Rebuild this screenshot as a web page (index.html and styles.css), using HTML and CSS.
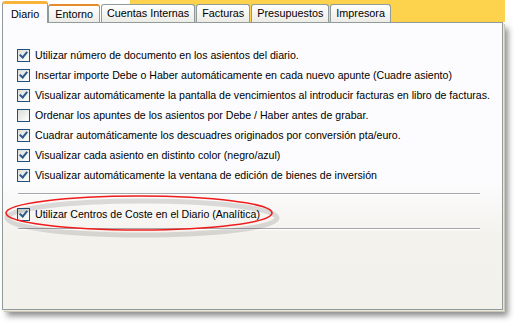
FILE: index.html
```html
<!DOCTYPE html>
<html lang="es">
<head>
    <meta charset="UTF-8">
    <title>Opciones - Diario</title>
    <link rel="stylesheet" href="styles.css">
</head>
<body>
<div class="window">
    <div class="tabstrip">
        <div class="tab selected">Diario</div>
        <div class="tab hot">Entorno</div>
        <div class="tab">Cuentas Internas</div>
        <div class="tab">Facturas</div>
        <div class="tab">Presupuestos</div>
        <div class="tab">Impresora</div>
    </div>
    <div class="panel">
        <div class="options">
            <label class="option"><span class="box checked"></span>Utilizar número de documento en los asientos del diario.</label>
            <label class="option"><span class="box checked"></span>Insertar importe Debe o Haber automáticamente en cada nuevo apunte (Cuadre asiento)</label>
            <label class="option"><span class="box checked"></span>Visualizar automáticamente la pantalla de vencimientos al introducir facturas en libro de facturas.</label>
            <label class="option"><span class="box"></span>Ordenar los apuntes de los asientos por Debe / Haber antes de grabar.</label>
            <label class="option"><span class="box checked"></span>Cuadrar automáticamente los descuadres originados por conversión pta/euro.</label>
            <label class="option"><span class="box checked"></span>Visualizar cada asiento en distinto color (negro/azul)</label>
            <label class="option"><span class="box checked"></span>Visualizar automáticamente la ventana de edición de bienes de inversión</label>
        </div>
        <div class="separator"></div>
        <div class="options single">
            <label class="option"><span class="box checked"></span>Utilizar Centros de Coste en el Diario (Analítica)</label>
        </div>
        <div class="separator last"></div>
    </div>
    <!-- red mark drawn over the screenshot -->
    <svg class="mark" width="290" height="50" viewBox="0 0 290 50">
        <ellipse cx="140" cy="26" rx="135" ry="17" fill="none" stroke="rgba(0,0,0,0.12)" stroke-width="5"/>
        <ellipse cx="137" cy="21" rx="133" ry="17" fill="none" stroke="#ee1c1c" stroke-width="1.6"/>
    </svg>
</div>
</body>
</html>
```

FILE: styles.css
```css
body {
    margin: 0;
    background-color: #fff;
    font-family: 'Liberation Sans', Arial, sans-serif;
    font-size: 10.6px;
    color: #000;
}

.window {
    position: relative;
    width: 519px;
    height: 326px;
}

.tabstrip {
    display: flex;
    align-items: flex-end;
    height: 22px;
    padding-left: 2px;
    background: linear-gradient(to right, #fff 130px, #fdd34d 130px, #fdd34d 505px, #fff 505px);
}

.tab {
    height: 17px;
    line-height: 17px;
    padding: 0 5px;
    margin-right: 1px;
    border: 1px solid #919b9c;
    border-bottom: none;
    border-radius: 3px 3px 0 0;
    background: linear-gradient(#fff, #ecebe6);
    font-size: 10.8px;
    white-space: nowrap;
}

.tab.hot {
    padding: 0 6px;
    border-top: 2px solid #e68b2c;
    height: 16px;
}

.tab.selected {
    position: relative;
    z-index: 1;
    line-height: 20px;
    margin-bottom: -1px;
    padding: 0 8px;
    margin-right: 0;
    border-top: 3px solid #f7b33a;
    height: 19px;
    background: #fcfcfe;
}

.panel {
    margin-left: 2px;
    width: 499px;
    height: 286px;
    border: 1px solid #919b9c;
    background: linear-gradient(#fcfcfe 0, #fcfcfe 55%, #f4f2ec 75%, #f3f1ec 100%);
    box-shadow: 1px 1px 0 #e9e6dc, 2px 2px 0 #cdc9ba, 5px 6px 6px rgba(0, 0, 0, 0.45);
}

.options {
    display: flex;
    flex-direction: column;
    padding: 22px 0 0 14px;
}

.options.single {
    padding-top: 9px;
}

.option {
    display: flex;
    align-items: center;
    height: 20px;
    white-space: nowrap;
}

.box {
    flex-shrink: 0;
    width: 11px;
    height: 11px;
    margin-right: 5px;
    border: 1px solid #1c5180;
    background: linear-gradient(135deg, #dcdcd6, #fff);
    position: relative;
}

.box.checked::after {
    content: "";
    position: absolute;
    left: 3px;
    top: 0px;
    width: 3px;
    height: 6px;
    border: solid #2a5a8c;
    border-width: 0 2px 2px 0;
    transform: rotate(40deg);
}

.separator {
    margin: 8px 0 0 15px;
    width: 462px;
    height: 1px;
    background: #a7a6aa;
    border-bottom: 1px solid #fff;
}

.separator.last {
    margin-top: 4px;
}

.mark {
    position: absolute;
    left: 2px;
    top: 192px;
}
```
